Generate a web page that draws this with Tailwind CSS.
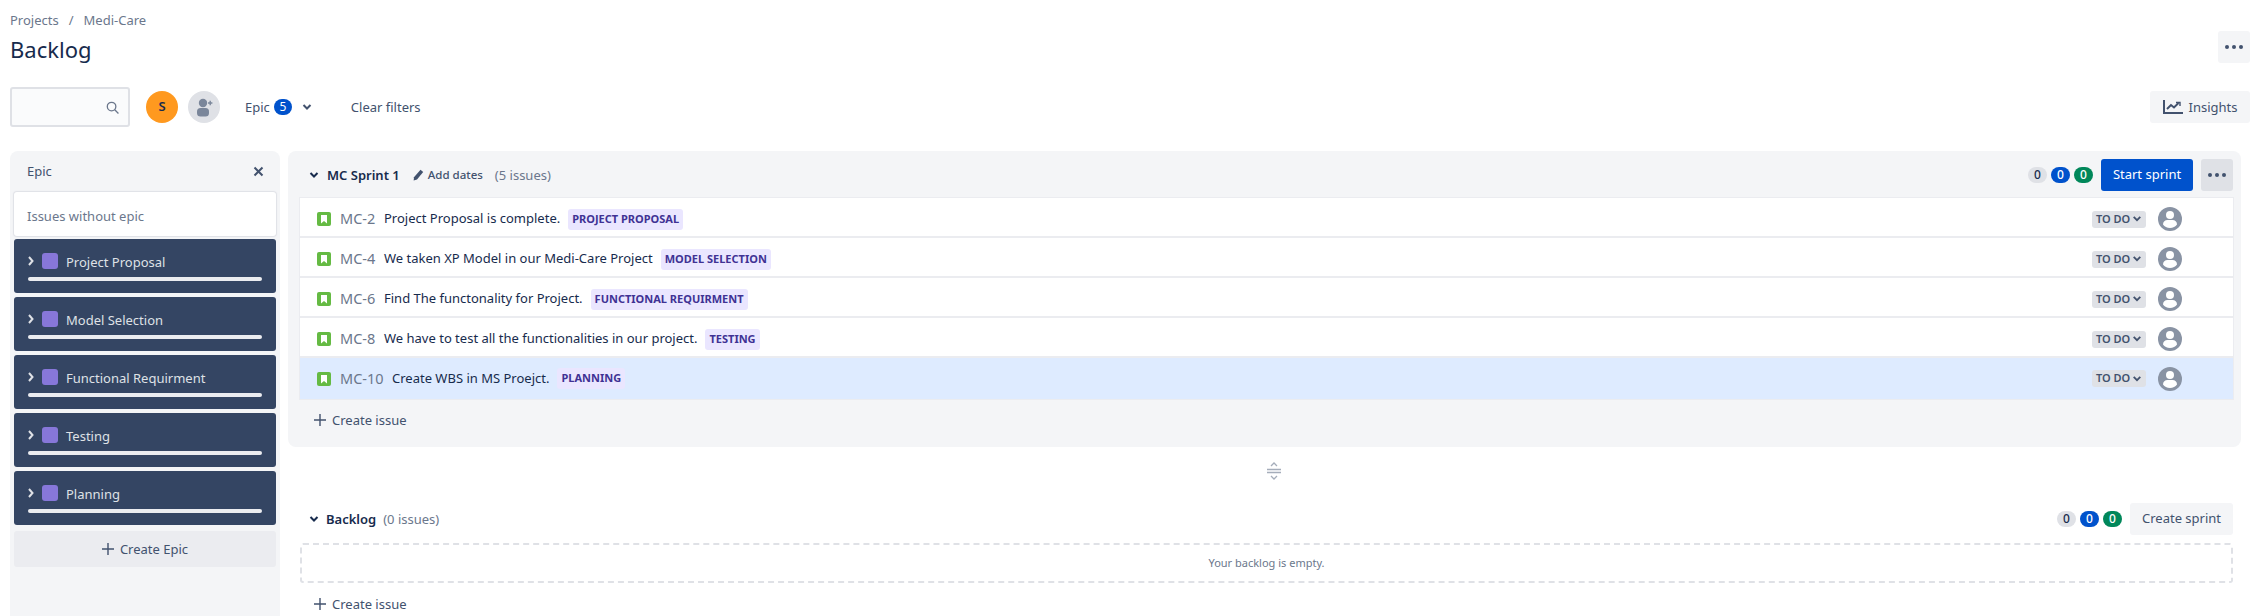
<!DOCTYPE html>
<html lang="en">
<head>
    <meta charset="UTF-8">
    <title>Backlog - Medi-Care</title>
    <script src="https://cdn.jsdelivr.net/npm/@tailwindcss/browser@4"></script>
</head>
<body class="bg-white text-[13px] text-[#172b4d] font-['Noto_Sans',sans-serif]">
<div class="h-[616px] overflow-hidden">

    <!-- page header -->
    <div class="flex justify-between pl-[10px] pr-[6px] pt-[11px] h-[74px]">
        <div>
            <div class="flex items-center h-[18px] text-[#6b778c] text-[13px] leading-[18px]">
                <span>Projects</span><span class="mx-[10px]">/</span><span>Medi-Care</span>
            </div>
            <h1 class="text-[22px] leading-[32px] mt-[4px] text-[#172b4d]">Backlog</h1>
        </div>
        <button class="w-[32px] h-[32px] mt-[20px] rounded-[3px] bg-[#f4f5f7] flex items-center justify-center gap-[3px]">
            <i class="w-[4px] h-[4px] rounded-full bg-[#42526e]"></i><i class="w-[4px] h-[4px] rounded-full bg-[#42526e]"></i><i class="w-[4px] h-[4px] rounded-full bg-[#42526e]"></i>
        </button>
    </div>

    <!-- filters -->
    <div class="flex items-center justify-between pl-[10px] pr-[6px] mt-[13px] h-[40px]">
        <div class="flex items-center">
            <div class="w-[120px] h-[40px] border-2 border-[#dfe1e6] rounded-[3px] bg-[#fafbfc] flex items-center justify-end pr-[9px]">
                <svg width="13" height="13" viewBox="0 0 14 14" fill="none" stroke="#6b778c" stroke-width="1.400"><circle cx="6" cy="6" r="4.600"/><path d="M9.400 9.400 13.400 13.400"/></svg>
            </div>
            <div class="ml-[16px] w-[32px] h-[32px] rounded-full bg-[#ff991f] flex items-center justify-center text-[13px] font-semibold text-[#172b4d]">S</div>
            <div class="ml-[10px] w-[32px] h-[32px] rounded-full bg-[#dfe1e6] flex items-center justify-center">
                <svg width="18" height="19" viewBox="0 0 18 19" fill="#7a869a"><circle cx="8" cy="5" r="4.200"/><rect x="2" y="10" width="12" height="8.500" rx="3.500"/><path d="M13 4.300h1.500V2.800h1.400v1.500h1.500v1.400h-1.500v1.500h-1.400V5.700H13z"/></svg>
            </div>
            <div class="ml-[25px] flex items-center text-[#42526e]">
                <span class="pt-[2px]">Epic</span>
                <span class="ml-[4px] w-[18px] h-[16px] rounded-full bg-[#0052cc] text-white text-[12px] flex items-center justify-center">5</span>
                <svg class="ml-[10px]" width="10" height="8" viewBox="0 0 10 8" fill="none" stroke="#42526e" stroke-width="2"><path d="M1.500 2 5 5.500 8.500 2"/></svg>
            </div>
            <span class="ml-[39px] pt-[2px] text-[#42526e]">Clear filters</span>
        </div>
        <button class="w-[100px] h-[32px] rounded-[3px] bg-[#f4f5f7] flex items-center justify-center gap-[6px] text-[#42526e]">
            <svg width="20" height="14" viewBox="0 0 20 14" fill="none" stroke="#42526e" stroke-width="2"><path d="M1 0v13h19"/><path d="M4 9l4-4 3 2.500L15.500 3"/><path d="M13 2.500h4V6" stroke-width="1.400"/></svg>
            <span class="pt-[2px]">Insights</span>
        </button>
    </div>

    <!-- main -->
    <div class="flex pl-[10px] mt-[24px] items-start">

        <!-- epic panel -->
        <aside class="w-[270px] h-[465px] shrink-0 bg-[#f4f5f7] rounded-t-[8px] px-[4px]">
            <div class="flex items-center justify-between h-[41px] pl-[13px] pr-[12px] text-[#42526e]">
                <span>Epic</span>
                <svg width="11" height="11" viewBox="0 0 11 11" fill="none" stroke="#42526e" stroke-width="2"><path d="M1.500 1.500l8 8M9.500 1.500l-8 8"/></svg>
            </div>
            <div class="h-[44px] bg-white rounded-[3px] shadow-[0_0_1px_1px_#dfe1e6] flex items-center pl-[13px] pt-[6px] text-[#6b778c]">Issues without epic</div>

            <div class="mt-[3px] flex flex-col gap-[4px]">
                <div class="h-[54px] bg-[#344563] rounded-[3px] px-[14px] pt-[13px]">
                    <div class="flex items-center h-[18px] text-[#dfe1e6]">
                        <svg width="6" height="10" viewBox="0 0 6 10" fill="none" stroke="#dfe1e6" stroke-width="2"><path d="M1 1l3.500 4L1 9"/></svg>
                        <i class="ml-[8px] w-[16px] h-[16px] rounded-[3px] bg-[#8777d9]"></i>
                        <span class="ml-[8px] pt-[3px]">Project Proposal</span>
                    </div>
                    <div class="mt-[7px] h-[4px] rounded-[2px] bg-[#ebecf0]"></div>
                </div>
                <div class="h-[54px] bg-[#344563] rounded-[3px] px-[14px] pt-[13px]">
                    <div class="flex items-center h-[18px] text-[#dfe1e6]">
                        <svg width="6" height="10" viewBox="0 0 6 10" fill="none" stroke="#dfe1e6" stroke-width="2"><path d="M1 1l3.500 4L1 9"/></svg>
                        <i class="ml-[8px] w-[16px] h-[16px] rounded-[3px] bg-[#8777d9]"></i>
                        <span class="ml-[8px] pt-[3px]">Model Selection</span>
                    </div>
                    <div class="mt-[7px] h-[4px] rounded-[2px] bg-[#ebecf0]"></div>
                </div>
                <div class="h-[54px] bg-[#344563] rounded-[3px] px-[14px] pt-[13px]">
                    <div class="flex items-center h-[18px] text-[#dfe1e6]">
                        <svg width="6" height="10" viewBox="0 0 6 10" fill="none" stroke="#dfe1e6" stroke-width="2"><path d="M1 1l3.500 4L1 9"/></svg>
                        <i class="ml-[8px] w-[16px] h-[16px] rounded-[3px] bg-[#8777d9]"></i>
                        <span class="ml-[8px] pt-[3px]">Functional Requirment</span>
                    </div>
                    <div class="mt-[7px] h-[4px] rounded-[2px] bg-[#ebecf0]"></div>
                </div>
                <div class="h-[54px] bg-[#344563] rounded-[3px] px-[14px] pt-[13px]">
                    <div class="flex items-center h-[18px] text-[#dfe1e6]">
                        <svg width="6" height="10" viewBox="0 0 6 10" fill="none" stroke="#dfe1e6" stroke-width="2"><path d="M1 1l3.500 4L1 9"/></svg>
                        <i class="ml-[8px] w-[16px] h-[16px] rounded-[3px] bg-[#8777d9]"></i>
                        <span class="ml-[8px] pt-[3px]">Testing</span>
                    </div>
                    <div class="mt-[7px] h-[4px] rounded-[2px] bg-[#ebecf0]"></div>
                </div>
                <div class="h-[54px] bg-[#344563] rounded-[3px] px-[14px] pt-[13px]">
                    <div class="flex items-center h-[18px] text-[#dfe1e6]">
                        <svg width="6" height="10" viewBox="0 0 6 10" fill="none" stroke="#dfe1e6" stroke-width="2"><path d="M1 1l3.500 4L1 9"/></svg>
                        <i class="ml-[8px] w-[16px] h-[16px] rounded-[3px] bg-[#8777d9]"></i>
                        <span class="ml-[8px] pt-[3px]">Planning</span>
                    </div>
                    <div class="mt-[7px] h-[4px] rounded-[2px] bg-[#ebecf0]"></div>
                </div>
            </div>

            <div class="mt-[6px] h-[36px] rounded-[3px] bg-[#ebecf0] flex items-center justify-center gap-[6px] text-[#42526e]">
                <svg width="12" height="12" viewBox="0 0 12 12" stroke="#42526e" stroke-width="1.400"><path d="M6 0v12M0 6h12"/></svg>
                <span class="pt-[2px]">Create Epic</span>
            </div>
        </aside>

        <!-- sprint + backlog -->
        <div class="ml-[8px] w-[1953px] shrink-0">
            <section class="bg-[#f4f5f7] rounded-[8px] h-[296px] pl-[12px] pr-[8px] pt-[8px]">
                <div class="flex items-center justify-between h-[32px]">
                    <div class="flex items-center">
                        <svg class="ml-[9px]" width="10" height="8" viewBox="0 0 10 8" fill="none" stroke="#172b4d" stroke-width="2"><path d="M1.500 2 5 5.500 8.500 2"/></svg>
                        <span class="ml-[8px] pt-[2px] font-semibold text-[#172b4d]">MC Sprint 1</span>
                        <svg class="ml-[13px]" width="11" height="12" viewBox="0 0 11 12" fill="#42526e"><path d="M7.500.8l2.700 2.100L4 10.500 0.600 11.600l.4-3.300z"/></svg>
                        <span class="ml-[4px] text-[11.5px] font-medium text-[#42526e]">Add dates</span>
                        <span class="ml-[12px] pt-[2px] text-[#6b778c]">(5 issues)</span>
                    </div>
                    <div class="flex items-center">
                        <span class="w-[19px] h-[16px] rounded-full bg-[#dfe1e6] text-[#172b4d] text-[12px] font-medium flex items-center justify-center">0</span>
                        <span class="ml-[4px] w-[19px] h-[16px] rounded-full bg-[#0052cc] text-white text-[12px] font-medium flex items-center justify-center">0</span>
                        <span class="ml-[4px] w-[19px] h-[16px] rounded-full bg-[#00875a] text-white text-[12px] font-medium flex items-center justify-center">0</span>
                        <button class="ml-[8px] w-[92px] h-[32px] rounded-[3px] bg-[#0052cc] text-white">Start sprint</button>
                        <button class="ml-[8px] w-[32px] h-[32px] rounded-[3px] bg-[#dfe1e6] flex items-center justify-center gap-[3px]">
                            <i class="w-[4px] h-[4px] rounded-full bg-[#42526e]"></i><i class="w-[4px] h-[4px] rounded-full bg-[#42526e]"></i><i class="w-[4px] h-[4px] rounded-full bg-[#42526e]"></i>
                        </button>
                    </div>
                </div>

                <div class="mt-[7px] bg-white shadow-[0_0_0_1px_#ebecf0]">
                    <div class="h-[40px] flex items-center border-b-2 border-[#ebecf0] pt-[4px] pl-[17px] pr-[51px]">
                        <svg width="14" height="14" viewBox="0 0 14 14"><rect width="14" height="14" rx="2" fill="#65ba43"/><path d="M4 3h6v8.500L7 9l-3 2.500z" fill="#fff"/></svg>
                        <span class="ml-[9px] w-[36px] text-[14.5px] text-[#6b778c]">MC-2</span>
                        <span class="ml-[8px] text-[#172b4d]">Project Proposal is complete.</span>
                        <span class="ml-[8px] h-[21px] px-[4px] rounded-[3px] bg-[#eae6ff] text-[#403294] text-[11px] font-bold leading-[20px]">PROJECT PROPOSAL</span>
                        <span class="ml-auto w-[54px] h-[17px] rounded-[3px] bg-[#dfe1e6] flex items-center pl-[4px] gap-[3px] text-[11px] font-semibold text-[#42526e]">TO DO<svg width="8" height="6" viewBox="0 0 8 6" fill="none" stroke="#42526e" stroke-width="1.800"><path d="M.7.9 4 4.200 7.300.9"/></svg></span>
                        <svg class="ml-[12px]" width="24" height="24" viewBox="0 0 24 24"><circle cx="12" cy="12" r="12" fill="#8993a4"/><circle cx="12" cy="8" r="4" fill="#fff"/><path d="M5 17.500c0-3 2-4.500 4.500-4.500h5c2.500 0 4.500 1.500 4.500 4.500-1.500 2-4 3.500-7 3.500s-5.500-1.500-7-3.500z" fill="#fff"/></svg>
                    </div>
                    <div class="h-[40px] flex items-center border-b-2 border-[#ebecf0] pt-[4px] pl-[17px] pr-[51px]">
                        <svg width="14" height="14" viewBox="0 0 14 14"><rect width="14" height="14" rx="2" fill="#65ba43"/><path d="M4 3h6v8.500L7 9l-3 2.500z" fill="#fff"/></svg>
                        <span class="ml-[9px] w-[36px] text-[14.5px] text-[#6b778c]">MC-4</span>
                        <span class="ml-[8px] text-[#172b4d]">We taken XP Model in our Medi-Care Project</span>
                        <span class="ml-[8px] h-[21px] px-[4px] rounded-[3px] bg-[#eae6ff] text-[#403294] text-[11px] font-bold leading-[20px]">MODEL SELECTION</span>
                        <span class="ml-auto w-[54px] h-[17px] rounded-[3px] bg-[#dfe1e6] flex items-center pl-[4px] gap-[3px] text-[11px] font-semibold text-[#42526e]">TO DO<svg width="8" height="6" viewBox="0 0 8 6" fill="none" stroke="#42526e" stroke-width="1.800"><path d="M.7.9 4 4.200 7.300.9"/></svg></span>
                        <svg class="ml-[12px]" width="24" height="24" viewBox="0 0 24 24"><circle cx="12" cy="12" r="12" fill="#8993a4"/><circle cx="12" cy="8" r="4" fill="#fff"/><path d="M5 17.500c0-3 2-4.500 4.500-4.500h5c2.500 0 4.500 1.500 4.500 4.500-1.500 2-4 3.500-7 3.500s-5.500-1.500-7-3.500z" fill="#fff"/></svg>
                    </div>
                    <div class="h-[40px] flex items-center border-b-2 border-[#ebecf0] pt-[4px] pl-[17px] pr-[51px]">
                        <svg width="14" height="14" viewBox="0 0 14 14"><rect width="14" height="14" rx="2" fill="#65ba43"/><path d="M4 3h6v8.500L7 9l-3 2.500z" fill="#fff"/></svg>
                        <span class="ml-[9px] w-[36px] text-[14.5px] text-[#6b778c]">MC-6</span>
                        <span class="ml-[8px] text-[#172b4d]">Find The functonality for Project.</span>
                        <span class="ml-[8px] h-[21px] px-[4px] rounded-[3px] bg-[#eae6ff] text-[#403294] text-[11px] font-bold leading-[20px]">FUNCTIONAL REQUIRMENT</span>
                        <span class="ml-auto w-[54px] h-[17px] rounded-[3px] bg-[#dfe1e6] flex items-center pl-[4px] gap-[3px] text-[11px] font-semibold text-[#42526e]">TO DO<svg width="8" height="6" viewBox="0 0 8 6" fill="none" stroke="#42526e" stroke-width="1.800"><path d="M.7.9 4 4.200 7.300.9"/></svg></span>
                        <svg class="ml-[12px]" width="24" height="24" viewBox="0 0 24 24"><circle cx="12" cy="12" r="12" fill="#8993a4"/><circle cx="12" cy="8" r="4" fill="#fff"/><path d="M5 17.500c0-3 2-4.500 4.500-4.500h5c2.500 0 4.500 1.500 4.500 4.500-1.500 2-4 3.500-7 3.500s-5.500-1.500-7-3.500z" fill="#fff"/></svg>
                    </div>
                    <div class="h-[40px] flex items-center border-b-2 border-[#ebecf0] pt-[4px] pl-[17px] pr-[51px]">
                        <svg width="14" height="14" viewBox="0 0 14 14"><rect width="14" height="14" rx="2" fill="#65ba43"/><path d="M4 3h6v8.500L7 9l-3 2.500z" fill="#fff"/></svg>
                        <span class="ml-[9px] w-[36px] text-[14.5px] text-[#6b778c]">MC-8</span>
                        <span class="ml-[8px] text-[#172b4d]">We have to test all the functionalities in our project.</span>
                        <span class="ml-[8px] h-[21px] px-[4px] rounded-[3px] bg-[#eae6ff] text-[#403294] text-[11px] font-bold leading-[20px]">TESTING</span>
                        <span class="ml-auto w-[54px] h-[17px] rounded-[3px] bg-[#dfe1e6] flex items-center pl-[4px] gap-[3px] text-[11px] font-semibold text-[#42526e]">TO DO<svg width="8" height="6" viewBox="0 0 8 6" fill="none" stroke="#42526e" stroke-width="1.800"><path d="M.7.9 4 4.200 7.300.9"/></svg></span>
                        <svg class="ml-[12px]" width="24" height="24" viewBox="0 0 24 24"><circle cx="12" cy="12" r="12" fill="#8993a4"/><circle cx="12" cy="8" r="4" fill="#fff"/><path d="M5 17.500c0-3 2-4.500 4.500-4.500h5c2.500 0 4.500 1.500 4.500 4.500-1.500 2-4 3.500-7 3.500s-5.500-1.500-7-3.500z" fill="#fff"/></svg>
                    </div>
                    <div class="h-[41px] flex items-center bg-[#deebff] pl-[17px] pr-[51px]">
                        <svg width="14" height="14" viewBox="0 0 14 14"><rect width="14" height="14" rx="2" fill="#65ba43"/><path d="M4 3h6v8.500L7 9l-3 2.500z" fill="#fff"/></svg>
                        <span class="ml-[9px] w-[44px] text-[14.5px] text-[#6b778c]">MC-10</span>
                        <span class="ml-[8px] text-[#172b4d]">Create WBS in MS Proejct.</span>
                        <span class="ml-[8px] h-[21px] px-[4px] rounded-[3px] bg-[#eae6ff] text-[#403294] text-[11px] font-bold leading-[20px]">PLANNING</span>
                        <span class="ml-auto w-[54px] h-[17px] rounded-[3px] bg-[#dfe1e6] flex items-center pl-[4px] gap-[3px] text-[11px] font-semibold text-[#42526e]">TO DO<svg width="8" height="6" viewBox="0 0 8 6" fill="none" stroke="#42526e" stroke-width="1.800"><path d="M.7.9 4 4.200 7.300.9"/></svg></span>
                        <svg class="ml-[12px]" width="24" height="24" viewBox="0 0 24 24"><circle cx="12" cy="12" r="12" fill="#8993a4"/><circle cx="12" cy="8" r="4" fill="#fff"/><path d="M5 17.500c0-3 2-4.500 4.500-4.500h5c2.500 0 4.500 1.500 4.500 4.500-1.500 2-4 3.500-7 3.500s-5.500-1.500-7-3.500z" fill="#fff"/></svg>
                    </div>
                </div>

                <div class="flex items-center h-[42px] pl-[14px] gap-[6px] text-[#42526e]">
                    <svg width="12" height="12" viewBox="0 0 12 12" stroke="#42526e" stroke-width="1.400"><path d="M6 0v12M0 6h12"/></svg>
                    <span class="pt-[2px]">Create issue</span>
                </div>
            </section>

            <!-- resize handle -->
            <div class="h-[48px] flex items-center justify-center pl-[18px]">
                <svg width="14" height="18" viewBox="0 0 14 18" fill="none" stroke="#a5adba" stroke-width="1.300"><path d="M4 4l3-3 3 3M4 14l3 3 3-3"/><path d="M0 7.500h14M0 10.500h14" stroke-width="1.500"/></svg>
            </div>

            <!-- backlog -->
            <section class="pl-[12px] pr-[8px] mt-[8px]">
                <div class="flex items-center justify-between h-[32px]">
                    <div class="flex items-center">
                        <svg class="ml-[9px]" width="10" height="8" viewBox="0 0 10 8" fill="none" stroke="#172b4d" stroke-width="2"><path d="M1.500 2 5 5.500 8.500 2"/></svg>
                        <span class="ml-[7px] pt-[2px] font-semibold text-[#172b4d]">Backlog</span>
                        <span class="ml-[7px] pt-[2px] text-[#6b778c]">(0 issues)</span>
                    </div>
                    <div class="flex items-center">
                        <span class="w-[19px] h-[16px] rounded-full bg-[#dfe1e6] text-[#172b4d] text-[12px] font-medium flex items-center justify-center">0</span>
                        <span class="ml-[4px] w-[19px] h-[16px] rounded-full bg-[#0052cc] text-white text-[12px] font-medium flex items-center justify-center">0</span>
                        <span class="ml-[4px] w-[19px] h-[16px] rounded-full bg-[#00875a] text-white text-[12px] font-medium flex items-center justify-center">0</span>
                        <button class="ml-[8px] w-[103px] h-[32px] rounded-[3px] bg-[#f4f5f7] text-[#42526e]">Create sprint</button>
                    </div>
                </div>
                <div class="mt-[8px] h-[40px] rounded-[3px] border-2 border-dashed border-[#dfe1e6] flex items-center justify-center text-[11px] text-[#6b778c]">Your backlog is empty.</div>
                <div class="flex items-center h-[42px] pl-[14px] gap-[6px] text-[#42526e]">
                    <svg width="12" height="12" viewBox="0 0 12 12" stroke="#42526e" stroke-width="1.400"><path d="M6 0v12M0 6h12"/></svg>
                    <span class="pt-[2px]">Create issue</span>
                </div>
            </section>
        </div>
    </div>
</div>
</body>
</html>
